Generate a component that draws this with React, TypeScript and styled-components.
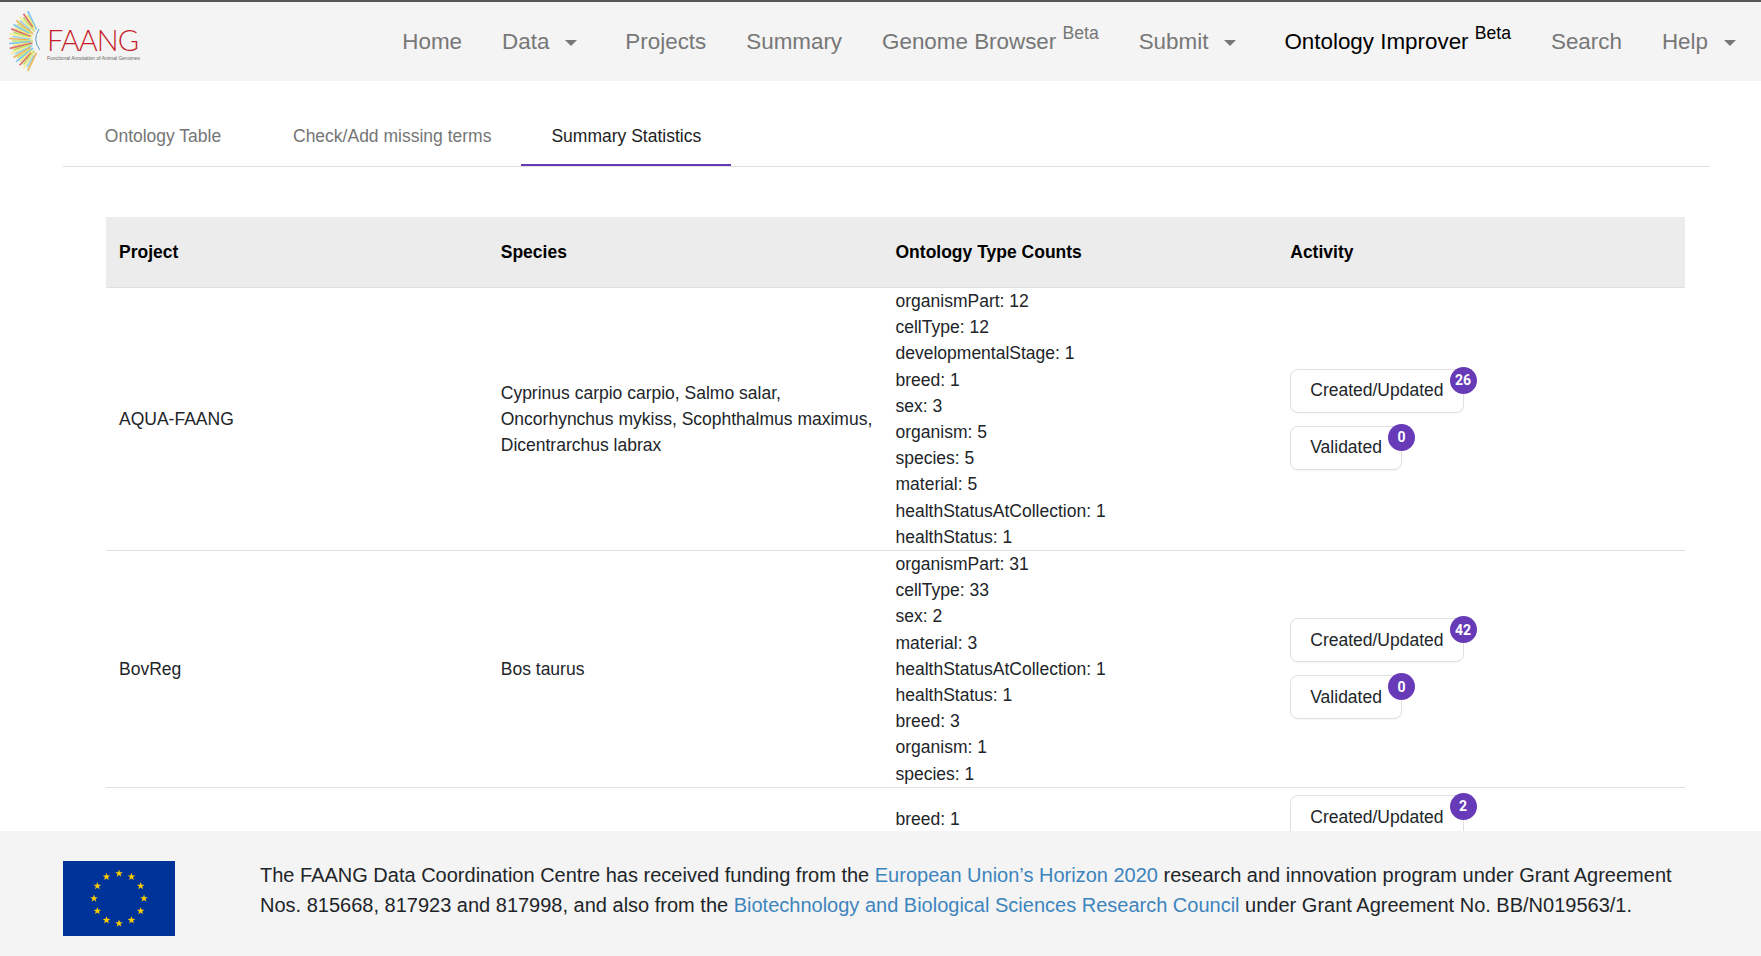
import React from "react";
import styled, { createGlobalStyle } from "styled-components";

const rows = [
    {
        project: "AQUA-FAANG",
        species: "Cyprinus carpio carpio, Salmo salar, Oncorhynchus mykiss, Scophthalmus maximus, Dicentrarchus labrax",
        counts: [
            "organismPart: 12",
            "cellType: 12",
            "developmentalStage: 1",
            "breed: 1",
            "sex: 3",
            "organism: 5",
            "species: 5",
            "material: 5",
            "healthStatusAtCollection: 1",
            "healthStatus: 1",
        ],
        created: 26,
        validated: 0,
    },
    {
        project: "BovReg",
        species: "Bos taurus",
        counts: [
            "organismPart: 31",
            "cellType: 33",
            "sex: 2",
            "material: 3",
            "healthStatusAtCollection: 1",
            "healthStatus: 1",
            "breed: 3",
            "organism: 1",
            "species: 1",
        ],
        created: 42,
        validated: 0,
    },
    {
        project: "",
        species: "",
        counts: ["breed: 1"],
        created: 2,
        validated: 0,
    },
];

export default function App() {
    return (
        <Page>
            <GlobalStyle />
            <NavBar>
                <Logo />
                <NavLinks>
                    <NavItem>Home</NavItem>
                    <NavItem>Data<Caret /></NavItem>
                    <NavItem>Projects</NavItem>
                    <NavItem>Summary</NavItem>
                    <NavItem>Genome Browser <Sup>Beta</Sup></NavItem>
                    <NavItem>Submit<Caret /></NavItem>
                    <NavItem $active>Ontology Improver <Sup>Beta</Sup></NavItem>
                    <NavItem>Search</NavItem>
                    <NavItem>Help<Caret /></NavItem>
                </NavLinks>
            </NavBar>
            <Content>
                <TabBar>
                    <Tab>Ontology Table</Tab>
                    <Tab>Check/Add missing terms</Tab>
                    <Tab $active>Summary Statistics</Tab>
                </TabBar>
                <Table>
                    <thead>
                        <tr>
                            <HeadCell>Project</HeadCell>
                            <HeadCell>Species</HeadCell>
                            <HeadCell>Ontology Type Counts</HeadCell>
                            <HeadCell>Activity</HeadCell>
                        </tr>
                    </thead>
                    <tbody>
                        {rows.map((row, i) => (
                            <tr key={i}>
                                <Cell>{row.project}</Cell>
                                <Cell>{row.species}</Cell>
                                <Cell $top={row.counts.length === 1}>
                                    {row.counts.map((count) => (
                                        <CountLine key={count}>{count}</CountLine>
                                    ))}
                                </Cell>
                                <Cell>
                                    <Activity>
                                        <ActivityButton>
                                            Created/Updated
                                            <Badge>{row.created}</Badge>
                                        </ActivityButton>
                                        <ActivityButton>
                                            Validated
                                            <Badge>{row.validated}</Badge>
                                        </ActivityButton>
                                    </Activity>
                                </Cell>
                            </tr>
                        ))}
                    </tbody>
                </Table>
            </Content>
            <Footer>
                <EuFlag />
                <FooterText>
                    The FAANG Data Coordination Centre has received funding from the{" "}
                    <FooterLink>European Union’s Horizon 2020</FooterLink> research and innovation program under
                    Grant Agreement Nos. 815668, 817923 and 817998, and also from the{" "}
                    <FooterLink>Biotechnology and Biological Sciences Research Council</FooterLink> under Grant
                    Agreement No. BB/N019563/1.
                </FooterText>
            </Footer>
        </Page>
    );
}

function Logo() {
    const colors = ["#7cc4ea", "#eee87a", "#dc6e66", "#c2da6a", "#f4ee92", "#9ad4ea", "#e8b45c", "#d0e274"];
    const rays = [];
    for (let i = 0; i < 31; i++) {
        const angle = ((i - 15) * 4.3 * Math.PI) / 180;
        const bend = Math.abs(i - 15) / 15;
        const inner = 9 + bend * 4 + (i % 3) * 2;
        const outer = 33 - (i % 2) * 3;
        rays.push(
            <line
                key={i}
                x1={42 - inner * Math.cos(angle)}
                y1={40 + inner * Math.sin(angle)}
                x2={42 - outer * Math.cos(angle)}
                y2={40 + outer * Math.sin(angle)}
                stroke={colors[i % colors.length]}
                strokeWidth={1.7}
            />
        );
    }
    return (
        <LogoBox>
            <svg width="47" height="79" viewBox="0 0 47 79">
                {rays}
                <path d="M39 28 Q32 39 40 49" fill="none" stroke="#5a9fc8" strokeWidth="1" />
            </svg>
            <LogoText>
                <LogoName>FAANG</LogoName>
                <LogoTagline>Functional Annotation of Animal Genomes</LogoTagline>
            </LogoText>
        </LogoBox>
    );
}

function EuFlag() {
    const stars = [];
    for (let i = 0; i < 12; i++) {
        const a = (i * Math.PI) / 6;
        const cx = 56 + 25 * Math.sin(a);
        const cy = 37.5 - 25 * Math.cos(a);
        let points = "";
        for (let p = 0; p < 10; p++) {
            const r = p % 2 === 0 ? 4 : 1.6;
            const t = (p * Math.PI) / 5;
            points += `${cx + r * Math.sin(t)},${cy - r * Math.cos(t)} `;
        }
        stars.push(<polygon key={i} points={points} fill="#ffcc00" />);
    }
    return (
        <FlagBox width="112" height="75" viewBox="0 0 112 75">
            <rect width="112" height="75" fill="#003399" />
            {stars}
        </FlagBox>
    );
}

const GlobalStyle = createGlobalStyle`
    html, body {
        margin: 0;
        padding: 0;
        height: 100%;
        overflow: hidden;
        background: #fff;
    }

    body {
        font-family: "Liberation Sans", Arial, sans-serif;
        color: #212529;
    }
`

const Page = styled.div`
    display: flex;
    flex-direction: column;
    height: 100vh;
`

const NavBar = styled.nav`
    flex: none;
    display: flex;
    align-items: center;
    justify-content: space-between;
    box-sizing: border-box;
    height: 81px;
    background: #f4f4f4;
    border-top: 2px solid #555;
`

const LogoBox = styled.div`
    display: flex;
    align-items: flex-start;
    height: 79px;
    margin-top: -2px;
`

const LogoText = styled.div`
    display: flex;
    flex-direction: column;
    margin-top: 24px;
    width: 92px;
`

const LogoName = styled.span`
    font-family: "Lato", sans-serif;
    font-weight: 300;
    font-size: 29px;
    letter-spacing: -1px;
    line-height: 30px;
    color: #c41e2a;
`

const LogoTagline = styled.span`
    font-size: 5px;
    line-height: 6px;
    color: #666;
    white-space: nowrap;
`

const NavLinks = styled.div`
    display: flex;
    align-items: center;
`

const NavItem = styled.span<{ $active?: boolean }>`
    display: flex;
    align-items: baseline;
    white-space: pre;
    padding: 0 20px;
    font-size: 22.4px;
    line-height: 33px;
    color: ${(p) => (p.$active ? "#000" : "#777")};

    &:last-child {
        padding-right: 17px;
    }
`

const Sup = styled.sup`
    font-size: 17.6px;
    line-height: 1;
    position: relative;
    top: -10px;
    vertical-align: baseline;
`

const Caret = styled.i`
    display: inline-block;
    width: 0;
    height: 0;
    margin-left: 16px;
    margin-right: 8px;
    border-top: 6px solid #777;
    border-left: 6px solid transparent;
    border-right: 6px solid transparent;
    transform: translateY(-3px);
`

const Content = styled.main`
    flex: 1;
    min-height: 0;
    overflow: hidden;
    padding: 25px 51px 0 63px;
    background: #fff;
`

const TabBar = styled.div`
    display: flex;
    height: 61px;
    box-sizing: border-box;
    border-bottom: 1px solid #e0e0e0;
`

const Tab = styled.div<{ $active?: boolean }>`
    box-sizing: border-box;
    display: flex;
    align-items: center;
    justify-content: center;
    min-width: 200px;
    height: 60px;
    padding: 0 30px;
    font-size: 17.5px;
    color: ${(p) => (p.$active ? "#212121" : "#757575")};
    box-shadow: ${(p) => (p.$active ? "inset 0 -2px 0 #673ab7" : "none")};
`

const Table = styled.table`
    table-layout: fixed;
    border-collapse: separate;
    border-spacing: 0;
    width: 1579px;
    margin: 50px 0 0 43px;
    font-size: 17.5px;
    line-height: 26.2px;
`

const HeadCell = styled.th`
    box-sizing: border-box;
    height: 71px;
    padding: 0 13px 0 0;
    text-align: left;
    font-weight: 700;
    color: #000;
    background: #ececec;
    border-bottom: 1px solid #e0e0e0;

    &:first-child {
        padding-left: 13px;
    }
`

const Cell = styled.td<{ $top?: boolean }>`
    padding: ${(p) => (p.$top ? "18px 13px 0 0" : "0 13px 0 0")};
    vertical-align: ${(p) => (p.$top ? "top" : "middle")};
    border-bottom: 1px solid #e0e0e0;

    &:first-child {
        padding-left: 13px;
    }
`

const CountLine = styled.div`
    white-space: nowrap;
`

const Activity = styled.div`
    display: flex;
    flex-direction: column;
    align-items: flex-start;
    gap: 13px;
    padding: 7px 0;
`

const ActivityButton = styled.div`
    position: relative;
    box-sizing: border-box;
    display: flex;
    align-items: center;
    height: 44px;
    padding: 0 19px;
    border: 1px solid #e0e0e0;
    border-radius: 8px;
    background: #fff;
    box-shadow: 0 1px 1px rgba(0, 0, 0, 0.03);
`

const Badge = styled.span`
    position: absolute;
    top: -3px;
    right: -14px;
    width: 27px;
    height: 27px;
    border-radius: 50%;
    display: flex;
    align-items: center;
    justify-content: center;
    font-family: "Roboto", sans-serif;
    font-size: 14px;
    font-weight: 700;
    color: #fff;
    background: #673ab7;
`

const Footer = styled.footer`
    flex: none;
    display: flex;
    align-items: flex-start;
    gap: 85px;
    box-sizing: border-box;
    height: 125px;
    padding: 30px 63px 0;
    background: #f4f4f4;
`

const FlagBox = styled.svg`
    flex: none;
`

const FooterText = styled.p`
    margin: -1px 0 0;
    max-width: 1420px;
    font-size: 20px;
    line-height: 30px;
    color: #212529;
`

const FooterLink = styled.a`
    color: #3d84bd;
`
